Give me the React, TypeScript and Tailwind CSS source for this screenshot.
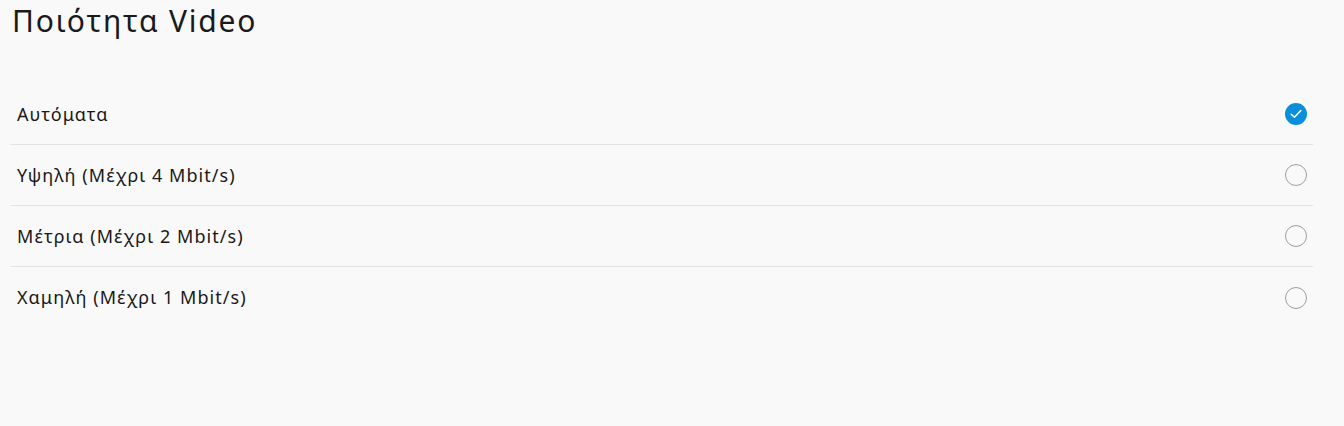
import { useState } from "react";

const options = [
  "Αυτόματα",
  "Υψηλή (Μέχρι 4 Mbit/s)",
  "Μέτρια (Μέχρι 2 Mbit/s)",
  "Χαμηλή (Μέχρι 1 Mbit/s)",
];

function Radio({ checked }: { checked: boolean }) {
  if (checked) {
    return (
      <span className="flex h-[22px] w-[22px] items-center justify-center rounded-full bg-[#0a90db]">
        <svg width="12" height="10" viewBox="0 0 12 10" fill="none">
          <path d="M1.2 5.2 L4.4 8.2 L10.8 1.6" stroke="white" strokeWidth="1.5" strokeLinecap="round" strokeLinejoin="round" />
        </svg>
      </span>
    );
  }
  return <span className="block h-[22px] w-[22px] rounded-full border-[1.5px] border-[#9e9e9e]" />;
}

export default function App() {
  const [selected, setSelected] = useState(0);

  return (
    <div className="min-h-[426px] w-full bg-[#f9f9f9] text-[#1a1a1a]" style={{ fontFamily: '"Noto Sans", sans-serif' }}>
      <h1 className="pl-3 pt-[1px] text-[30px] leading-[40px] font-normal tracking-[1.8px]">Ποιότητα Video</h1>
      <div className="ml-[11px] mr-[31px] mt-[43px]">
        {options.map((label, i) => (
          <div
            key={label}
            onClick={() => setSelected(i)}
            className={`flex h-[61px] cursor-pointer items-center justify-between px-[6px] ${i < options.length - 1 ? "border-b border-[#e4e4e4]" : ""}`}
          >
            <span className="text-[18px] tracking-[1.05px]">{label}</span>
            <Radio checked={selected === i} />
          </div>
        ))}
      </div>
    </div>
  );
}
